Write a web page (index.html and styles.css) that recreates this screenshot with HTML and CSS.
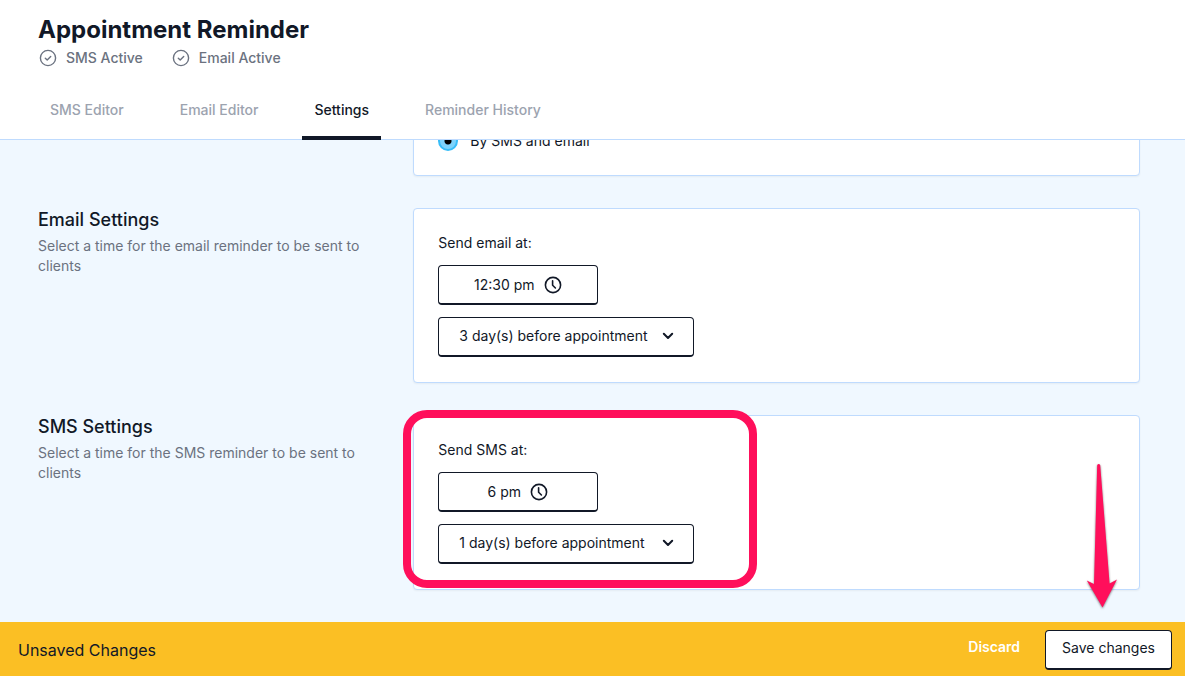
FILE: index.html
```html
<!DOCTYPE html>
<html lang="en">
<head>
    <meta charset="UTF-8">
    <meta name="viewport" content="width=device-width, initial-scale=1.0">
    <title>Appointment Reminder</title>
    <link rel="stylesheet" href="styles.css">
</head>

<body>
    <header>
        <h1>Appointment Reminder</h1>
        <div class="status-wrap">
            <div class="status">
                <svg viewBox="0 0 18 18"><circle cx="9" cy="9" r="7.6"/><path d="M6.3 9.2l1.9 1.8 3.5-3.6"/></svg>
                <span>SMS Active</span>
            </div>
            <div class="status">
                <svg viewBox="0 0 18 18"><circle cx="9" cy="9" r="7.6"/><path d="M6.3 9.2l1.9 1.8 3.5-3.6"/></svg>
                <span>Email Active</span>
            </div>
        </div>
        <nav>
            <a href="#">SMS Editor</a>
            <a href="#">Email Editor</a>
            <a href="#" class="active">Settings</a>
            <a href="#">Reminder History</a>
        </nav>
    </header>

    <main>
        <section>
            <div class="card">
                <label class="radio">
                    <input type="radio" name="send-by" checked>
                    <span>By SMS and email</span>
                </label>
            </div>
        </section>

        <section>
            <div class="info">
                <h2>Email Settings</h2>
                <p>Select a time for the email reminder to be sent to clients</p>
            </div>
            <div class="card">
                <label class="field-label" for="email-time">Send email at:</label>
                <button type="button" class="time" id="email-time">
                    12:30 pm
                    <svg viewBox="0 0 18 18"><circle cx="9" cy="9" r="7.6"/><path d="M8.6 4.8v4.4l2.8 2.8"/></svg>
                </button>
                <div class="select-wrap">
                    <select aria-label="Email reminder day">
                        <option>3 day(s) before appointment</option>
                    </select>
                    <svg viewBox="0 0 12 12"><path d="M1.8 3.8L6 8l4.2-4.2"/></svg>
                </div>
            </div>
        </section>

        <section>
            <div class="info">
                <h2>SMS Settings</h2>
                <p>Select a time for the SMS reminder to be sent to clients</p>
            </div>
            <div class="card">
                <label class="field-label" for="sms-time">Send SMS at:</label>
                <button type="button" class="time" id="sms-time">
                    6 pm
                    <svg viewBox="0 0 18 18"><circle cx="9" cy="9" r="7.6"/><path d="M8.6 4.8v4.4l2.8 2.8"/></svg>
                </button>
                <div class="select-wrap">
                    <select aria-label="SMS reminder day">
                        <option>1 day(s) before appointment</option>
                    </select>
                    <svg viewBox="0 0 12 12"><path d="M1.8 3.8L6 8l4.2-4.2"/></svg>
                </div>
                <div class="highlight"></div>
                <svg class="arrow" viewBox="0 0 32 146"><path d="M11.2 2Q12.8 0 14.2 2L23.6 120.5 31 116.500 16.500 144.500 0.800 117.500 8 121z"/></svg>
            </div>
        </section>
    </main>

    <footer>
        <div class="message">Unsaved Changes</div>
        <button type="button" class="discard">Discard</button>
        <button type="button" class="save">Save changes</button>
    </footer>
</body>

</html>
```

FILE: styles.css
```css
* {
    padding: 0;
    margin: 0;
    box-sizing: border-box;
}
body {
    height: 100vh;
    display: flex;
    flex-direction: column;
    font-family: Inter, "Liberation Sans", sans-serif;
    font-size: 14px;
    line-height: 20px;
    color: #111827;
    background-color: #f0f8ff;
}
button,
select {
    font: inherit;
    color: inherit;
    cursor: pointer;
}
svg {
    fill: none;
    stroke: currentColor;
    stroke-linecap: round;
    stroke-linejoin: round;
}
header {
    padding: 14px 38px 0;
    background-color: #fff;
    border-bottom: 1px solid #bfdbfe;
}
h1 {
    font-size: 24px;
    line-height: 32px;
    font-weight: 700;
}
.status-wrap {
    display: flex;
    gap: 28px;
    margin-top: 2px;
    color: #6b7280;
    font-weight: 500;
}
.status {
    display: flex;
    align-items: center;
    gap: 8px;
}
.status svg {
    width: 18px;
    height: 18px;
    margin: 0 1px;
    stroke-width: 1.4;
}
nav {
    display: flex;
    gap: 32px;
    margin-top: 12px;
    margin-bottom: -1px;
}
nav a {
    padding: 20px 12px 16px;
    border-bottom: 4px solid transparent;
    color: #9ca3af;
    font-weight: 500;
    text-decoration: none;
}
nav a.active {
    color: #111827;
    border-color: #111827;
}
main {
    flex: 1;
    min-height: 0;
    display: flex;
    flex-direction: column;
    justify-content: flex-end;
    gap: 32px;
    padding: 0 45px 32px 38px;
    overflow: hidden;
}
section {
    display: grid;
    grid-template-columns: repeat(3, 1fr);
    gap: 24px;
}
h2 {
    font-size: 18px;
    line-height: 24px;
    font-weight: 500;
}
.info p {
    margin-top: 4px;
    color: #6b7280;
}
.card {
    position: relative;
    grid-column: 2 / 4;
    display: flex;
    flex-direction: column;
    align-items: flex-start;
    gap: 12px;
    padding: 24px 24px 25px;
    background-color: #fff;
    border: 1px solid #bfdbfe;
    border-radius: 4px;
    box-shadow: 0 1px 2px rgba(0, 0, 0, .05);
}
.card:has(.radio) {
    padding-bottom: 24px;
}
.radio {
    display: flex;
    align-items: center;
    gap: 12px;
}
.radio input {
    appearance: none;
    width: 20px;
    height: 20px;
    border: 2px solid #38bdf8;
    border-radius: 50%;
    background: radial-gradient(circle, #000 3px, #7dd3fc 4px);
}
.time,
.select-wrap select,
.save {
    height: 40px;
    background-color: #fff;
    border: 1px solid #111827;
    border-bottom-width: 2px;
    border-radius: 4px;
}
.time {
    width: 160px;
    display: flex;
    justify-content: center;
    align-items: center;
    gap: 8px;
}
.time svg {
    width: 18px;
    height: 18px;
    margin: 0 1px;
    stroke-width: 1.6;
}
.select-wrap {
    position: relative;
    width: 256px;
}
.select-wrap select {
    display: block;
    appearance: none;
    width: 100%;
    padding: 0 20px 2px;
}
.select-wrap svg {
    position: absolute;
    top: 13px;
    right: 20px;
    width: 12px;
    height: 12px;
    stroke-width: 2;
    pointer-events: none;
}
.highlight {
    position: absolute;
    top: -6px;
    left: -11px;
    width: 354px;
    height: 178px;
    border: 8px solid #ff0f5b;
    border-radius: 24px;
    pointer-events: none;
}
.arrow {
    position: absolute;
    top: 47px;
    right: 21px;
    width: 32px;
    height: 146px;
    fill: #ff0f5b;
    stroke: none;
    filter: drop-shadow(0 1px 1px rgba(0, 0, 0, .5));
}
footer {
    display: flex;
    align-items: center;
    padding: 8px 13px 6px 18px;
    background-color: #fbbf24;
}
.message {
    flex: 1;
    font-size: 16px;
}
.discard {
    padding-bottom: 6px;
    margin-right: 25px;
    border: none;
    background: none;
    color: #fff;
    font-weight: 600;
}
.save {
    padding: 0 16px 4px;
}
```
